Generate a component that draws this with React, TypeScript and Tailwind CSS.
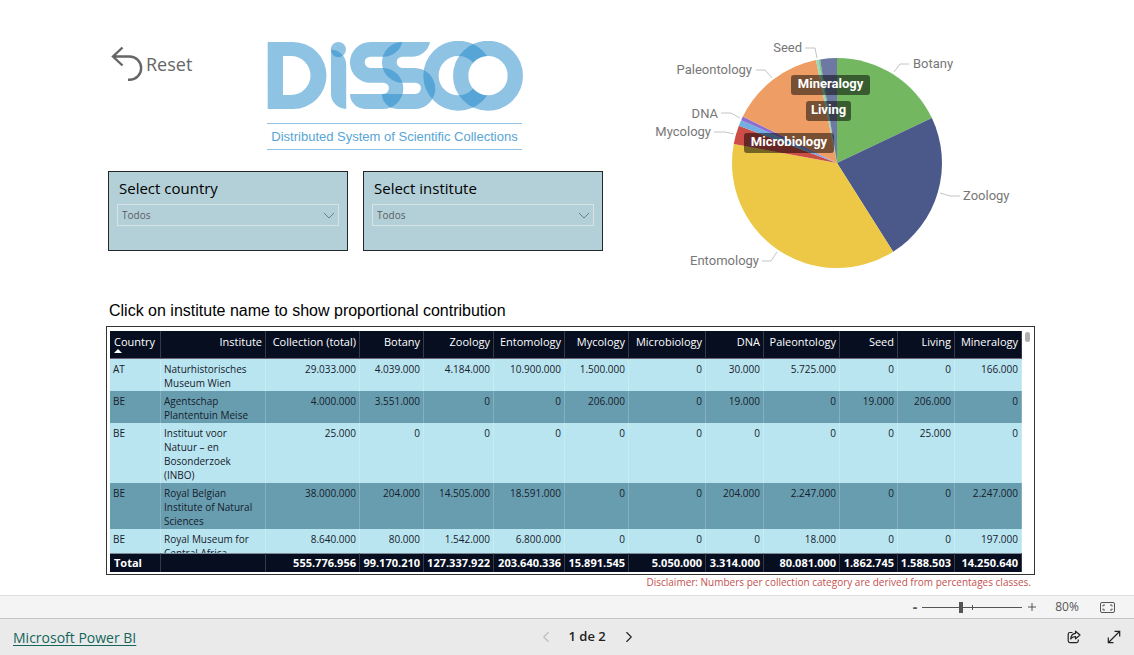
import { ChevronLeft, ChevronRight } from 'lucide-react';

const columns = [
  { name: 'Country', width: 'w-[51px]' },
  { name: 'Institute', width: 'w-[105px]' },
  { name: 'Collection (total)', width: 'w-[94px]' },
  { name: 'Botany', width: 'w-[64px]' },
  { name: 'Zoology', width: 'w-[70px]' },
  { name: 'Entomology', width: 'w-[71px]' },
  { name: 'Mycology', width: 'w-[64px]' },
  { name: 'Microbiology', width: 'w-[77px]' },
  { name: 'DNA', width: 'w-[58px]' },
  { name: 'Paleontology', width: 'w-[76px]' },
  { name: 'Seed', width: 'w-[58px]' },
  { name: 'Living', width: 'w-[57px]' },
  { name: 'Mineralogy', width: 'w-[67px]' }
];

const rows = [
  ['AT', 'Naturhistorisches Museum Wien', '29.033.000', '4.039.000', '4.184.000', '10.900.000', '1.500.000', '0', '30.000', '5.725.000', '0', '0', '166.000'],
  ['BE', 'Agentschap Plantentuin Meise', '4.000.000', '3.551.000', '0', '0', '206.000', '0', '19.000', '0', '19.000', '206.000', '0'],
  ['BE', 'Instituut voor Natuur – en Bosonderzoek (INBO)', '25.000', '0', '0', '0', '0', '0', '0', '0', '0', '25.000', '0'],
  ['BE', 'Royal Belgian Institute of Natural Sciences', '38.000.000', '204.000', '14.505.000', '18.591.000', '0', '0', '204.000', '2.247.000', '0', '0', '2.247.000'],
  ['BE', 'Royal Museum for Central Africa', '8.640.000', '80.000', '1.542.000', '6.800.000', '0', '0', '0', '18.000', '0', '0', '197.000']
];

const totals = ['Total', '', '555.776.956', '99.170.210', '127.337.922', '203.640.336', '15.891.545', '5.050.000', '3.314.000', '80.081.000', '1.862.745', '1.588.503', '14.250.640'];

const slices = [
  { name: 'Botany', value: 99170210, color: '#73b761' },
  { name: 'Zoology', value: 127337922, color: '#4a588a' },
  { name: 'Entomology', value: 203640336, color: '#ecc846' },
  { name: 'Mycology', value: 15891545, color: '#cd4c46' },
  { name: 'Microbiology', value: 5050000, color: '#71afe2' },
  { name: 'DNA', value: 3314000, color: '#8d6fd1' },
  { name: 'Paleontology', value: 80081000, color: '#ee9e64' },
  { name: 'Seed', value: 1862745, color: '#95dabb' },
  { name: 'Living', value: 1588503, color: '#7fc98b' },
  { name: 'Mineralogy', value: 14250640, color: '#6e79a3' }
];

// Label positions are relative to the centre of the pie
const outerLabels = [
  { name: 'Botany', line: '57,-91 63,-99 72,-99', x: 76, y: -95, anchor: 'start' },
  { name: 'Zoology', line: '103,30 113,33 123,33', x: 126, y: 37, anchor: 'start' },
  { name: 'Entomology', line: '-60,89 -66,98 -75,98', x: -78, y: 102, anchor: 'end' },
  { name: 'Mycology', line: '-103,-29 -112,-31 -123,-31', x: -126, y: -27, anchor: 'end' },
  { name: 'DNA', line: '-97,-45 -106,-50 -116,-50', x: -119, y: -45, anchor: 'end' },
  { name: 'Paleontology', line: '-65,-85 -72,-93 -81,-93', x: -85, y: -89, anchor: 'end' },
  { name: 'Seed', line: '-20,-105 -22,-115 -32,-115', x: -35, y: -111, anchor: 'end' }
] as const;

const innerLabels = [
  { name: 'Mineralogy', x: -46, y: -88, width: 79 },
  { name: 'Living', x: -31, y: -62, width: 45 },
  { name: 'Microbiology', x: -93, y: -30, width: 90 }
];

const RADIUS = 105;

function slicePaths() {
  const sum = slices.reduce((acc, s) => acc + s.value, 0);
  let start = 0;
  return slices.map((s) => {
    const end = start + (s.value / sum) * Math.PI * 2;
    const x1 = RADIUS * Math.sin(start);
    const y1 = -RADIUS * Math.cos(start);
    const x2 = RADIUS * Math.sin(end);
    const y2 = -RADIUS * Math.cos(end);
    const large = end - start > Math.PI ? 1 : 0;
    start = end;
    return { ...s, d: `M0 0L${x1} ${y1}A${RADIUS} ${RADIUS} 0 ${large} 1 ${x2} ${y2}Z` };
  });
}

function PieChart() {
  return (
    <svg
      viewBox="-187 -125 370 232"
      className="w-[370px] shrink-0 font-['Roboto',sans-serif] text-[13px]"
      role="img"
      aria-label="Collection size by category"
    >
      {slicePaths().map((s) => (
        <path key={s.name} d={s.d} fill={s.color} />
      ))}
      {outerLabels.map((l) => (
        <g key={l.name}>
          <polyline points={l.line} fill="none" stroke="#c4c4c4" />
          <text x={l.x} y={l.y} textAnchor={l.anchor} fill="#777777">
            {l.name}
          </text>
        </g>
      ))}
      {innerLabels.map((l) => (
        <g key={l.name}>
          <rect x={l.x} y={l.y} width={l.width} height="20" rx="3" fill="#000000" fillOpacity="0.5" />
          <text x={l.x + l.width / 2} y={l.y + 13} textAnchor="middle" fill="#ffffff" className="font-bold">
            {l.name}
          </text>
        </g>
      ))}
    </svg>
  );
}

function Logo() {
  return (
    <div className="w-[255px]">
      <svg viewBox="267 41 256 70" className="block w-[256px]" role="img" aria-label="DiSSCo">
        <g fill="#1f87c9" fillOpacity="0.5">
          <path fillRule="evenodd" d="M267.7 42H293A33.5 33.5 0 0 1 293 109H267.7ZM283 56V95H291A19.5 19.5 0 0 0 291 56Z" />
          <circle cx="338.4" cy="49.6" r="7.6" />
          <path d="M331 49.7A15.2 15.2 0 0 1 346.2 65V109A15.2 15.2 0 0 1 331 94Z" />
          <path d="M402.3 42H370.3A20.35 20.35 0 0 0 370.3 82.7H383.3A5.65 5.65 0 0 1 383.3 94H350A15 15 0 0 0 365 109H382.8A20.5 20.5 0 0 0 382.8 68H370.3A5.65 5.65 0 0 1 370.3 56.7H384A19 19 0 0 0 402.3 42Z" />
          <path d="M430 42H402.3A20.35 20.35 0 0 0 402.3 82.7H415.3A5.65 5.65 0 0 1 415.3 94H382A15 15 0 0 0 397 109H414.8A20.5 20.5 0 0 0 414.8 68H402.3A5.65 5.65 0 0 1 402.3 56.7H413A18 18 0 0 0 430 42Z" />
        </g>
        <circle cx="458.3" cy="75.7" r="27.3" fill="none" stroke="#1f87c9" strokeOpacity="0.5" strokeWidth="15.3" />
        <circle cx="488" cy="75.7" r="19.7" fill="#ffffff" />
        <circle cx="488" cy="75.7" r="27.3" fill="none" stroke="#1f87c9" strokeOpacity="0.5" strokeWidth="15.3" />
      </svg>
      <p className="mt-3 border-y border-[#8fc2e4] text-center font-['Liberation_Sans',sans-serif] text-[13px] leading-[25px] whitespace-nowrap text-[#57a5d5]">
        Distributed System of Scientific Collections
      </p>
    </div>
  );
}

function Slicer({ id, label }: { id: string; label: string }) {
  return (
    <div className="h-20 w-[240px] border border-[#23292b] bg-[#b3d0d8] px-2 pt-1">
      <label htmlFor={id} className="block pl-[2px] text-[15px] leading-6 text-black">
        {label}
      </label>
      <div className="relative mt-1">
        <select
          id={id}
          className="block h-[22px] w-full appearance-none border border-[#d9e3e6] bg-transparent px-1 text-[10px] text-[#5c5c5c]"
        >
          <option>Todos</option>
        </select>
        <svg viewBox="0 0 12 7" className="pointer-events-none absolute top-2 right-1 w-3" fill="none" stroke="#6f7c80">
          <path d="M1 1L6 6L11 1" />
        </svg>
      </div>
    </div>
  );
}

function CollectionTable() {
  return (
    <div className="flex border border-[#333333] pt-1 pb-[2px] pl-[3px]">
      <div className="h-[241px] flex-1 overflow-y-auto [scrollbar-width:none]">
        <table className="w-full table-fixed border-separate border-spacing-0">
          <thead className="sticky top-0 text-[11px] leading-[14px] text-white">
            <tr>
              {columns.map((c, i) => (
                <th
                  key={c.name}
                  scope="col"
                  aria-sort={i === 0 ? 'ascending' : undefined}
                  className={`${c.width} h-7 border-r border-b border-r-[#333a4a] border-b-[#6d6478] bg-[#060e20] pt-1 pr-[3px] align-top font-normal whitespace-nowrap ${i === 0 ? 'pl-1 text-left' : 'text-right'}`}
                >
                  {c.name}
                  {i === 0 && (
                    <svg viewBox="0 0 8 4" className="block w-2" fill="#ffffff">
                      <path d="M0 4L4 0L8 4Z" />
                    </svg>
                  )}
                </th>
              ))}
            </tr>
          </thead>
          <tbody className="text-[10px] leading-[14px] text-[#16202a]">
            {rows.map((row, r) => (
              <tr key={row[1]} className={r % 2 === 0 ? 'bg-[#b9e5f1]' : 'bg-[#689db0]'}>
                {row.map((cell, i) => (
                  <td
                    key={i}
                    className={`border-r border-white/20 pt-[3px] pr-[3px] pb-px align-top ${i < 2 ? 'pl-[3px] text-left' : 'text-right'}`}
                  >
                    {cell}
                  </td>
                ))}
              </tr>
            ))}
          </tbody>
          <tfoot className="sticky bottom-0 text-[11px] leading-[18px] text-white">
            <tr>
              {totals.map((cell, i) => (
                <td
                  key={i}
                  className={`border-t border-r border-t-[#7d8a96] border-r-[#333a4a] bg-[#060e20] pr-[3px] font-bold ${i === 0 ? 'pl-1 text-left' : 'text-right'}`}
                >
                  {cell}
                </td>
              ))}
            </tr>
          </tfoot>
        </table>
      </div>
      <div className="w-3 pt-px pl-[3px]">
        <div className="h-[10px] w-[5px] rounded-full bg-[#b0b0b0]" />
      </div>
    </div>
  );
}

function ZoomBar() {
  return (
    <div className="flex h-[23px] items-center justify-end border-t border-[#dedede] bg-[#f4f4f4] pr-[19px] text-[#555555]">
      <button type="button" aria-label="Zoom out" className="w-[14px] text-[14px] font-bold leading-none">
        -
      </button>
      <div className="relative flex">
        <input
          type="range"
          min="0"
          max="100"
          defaultValue="39"
          aria-label="Zoom level"
          className="h-3 w-[100px] appearance-none bg-transparent [&::-webkit-slider-runnable-track]:h-px [&::-webkit-slider-runnable-track]:bg-[#555555] [&::-webkit-slider-thumb]:-mt-[5px] [&::-webkit-slider-thumb]:h-[11px] [&::-webkit-slider-thumb]:w-1 [&::-webkit-slider-thumb]:appearance-none [&::-webkit-slider-thumb]:bg-[#555555]"
        />
        <span className="pointer-events-none absolute top-1 left-1/2 h-[5px] w-px bg-[#555555]" />
      </div>
      <button type="button" aria-label="Zoom in" className="flex w-5 justify-center">
        <svg viewBox="0 0 8 8" className="w-2" stroke="#555555">
          <path d="M4 0V8M0 4H8" />
        </svg>
      </button>
      <span className="w-[50px] text-center text-[12px]">80%</span>
      <button type="button" aria-label="Fit to page" className="ml-2">
        <svg viewBox="0 0 15 11" className="w-[15px]" fill="none" stroke="#555555">
          <rect x="0.5" y="0.5" width="14" height="10" rx="1.5" />
          <path d="M5 3H3V4.5M10 3H12V4.5M5 8H3V6.5M10 8H12V6.5" />
        </svg>
      </button>
    </div>
  );
}

function Footer() {
  return (
    <footer className="flex h-[37px] items-center justify-between border-t border-[#c6c6c6] bg-[#eaeaea] pl-[13px]">
      <a href="#" className="text-[14px] text-[#14665c] underline underline-offset-2">
        Microsoft Power BI
      </a>
      <nav className="flex items-center gap-[14px] text-[13px] font-semibold text-[#222222]" aria-label="Pages">
        <button type="button" aria-label="Previous page" disabled className="text-[#bdbdbd]">
          <ChevronLeft className="size-[18px]" strokeWidth={1.5} />
        </button>
        <span>1 de 2</span>
        <button type="button" aria-label="Next page">
          <ChevronRight className="size-[18px]" strokeWidth={1.5} />
        </button>
      </nav>
      <div className="flex pl-4">
        <button type="button" aria-label="Share" className="flex w-10 justify-center">
          <svg viewBox="0 0 14 14" className="w-[14px]" fill="none" stroke="#222222" strokeWidth="1.2" strokeLinejoin="round">
            <path d="M5.5 2.5H3A1.8 1.8 0 0 0 1.2 4.3V10.8A1.8 1.8 0 0 0 3 12.6H9.5A1.8 1.8 0 0 0 11.3 10.8V9.5" />
            <path d="M8.5 1.2L13 5L8.5 8.8V6.6C6.3 6.5 4.8 7.3 3.7 9C3.9 5.8 5.5 3.7 8.5 3.4Z" />
          </svg>
        </button>
        <button type="button" aria-label="Full screen" className="flex w-10 justify-center">
          <svg viewBox="0 0 14 14" className="w-[14px]" fill="none" stroke="#222222" strokeWidth="1.2">
            <path d="M1.5 12.5L12.5 1.5M7.5 1.3H12.7V6.5M1.3 7.5V12.7H6.5" />
          </svg>
        </button>
      </div>
    </footer>
  );
}

export default function App() {
  return (
    <div className="flex min-h-screen flex-col bg-white font-['Open_Sans','Noto_Sans',sans-serif]">
      <main className="flex-1 pr-[99px] pl-[106px]">
        <div className="flex justify-between pt-[38px] pr-[15px]">
          <div className="pt-[3px] pl-[2px]">
            <div className="flex items-start">
              <div className="w-[159px] shrink-0 pt-[5px] pl-[3px]">
                <button type="button" className="flex items-center gap-[3px] text-[18px] text-[#666666]">
                  <svg viewBox="0 0 32 36" className="w-8" fill="none" stroke="#666666" strokeWidth="2.4">
                    <path d="M11.5 1.5L2 10.5L11.5 19.5M2 10.5H18.5A11.6 11.6 0 0 1 18.5 33.8H17" />
                  </svg>
                  Reset
                </button>
              </div>
              <Logo />
            </div>
            <div className="mt-[21px] flex gap-[15px]">
              <Slicer id="country" label="Select country" />
              <Slicer id="institute" label="Select institute" />
            </div>
          </div>
          <PieChart />
        </div>
        <h2 className="mt-[29px] mb-[3px] pl-[3px] font-['Liberation_Sans',sans-serif] text-[16px] leading-6 text-black">
          Click on institute name to show proportional contribution
        </h2>
        <CollectionTable />
        <p className="pr-1 text-right text-[10px] leading-[14px] text-[#c44f4f]">
          Disclaimer: Numbers per collection category are derived from percentages classes.
        </p>
      </main>
      <ZoomBar />
      <Footer />
    </div>
  );
}
